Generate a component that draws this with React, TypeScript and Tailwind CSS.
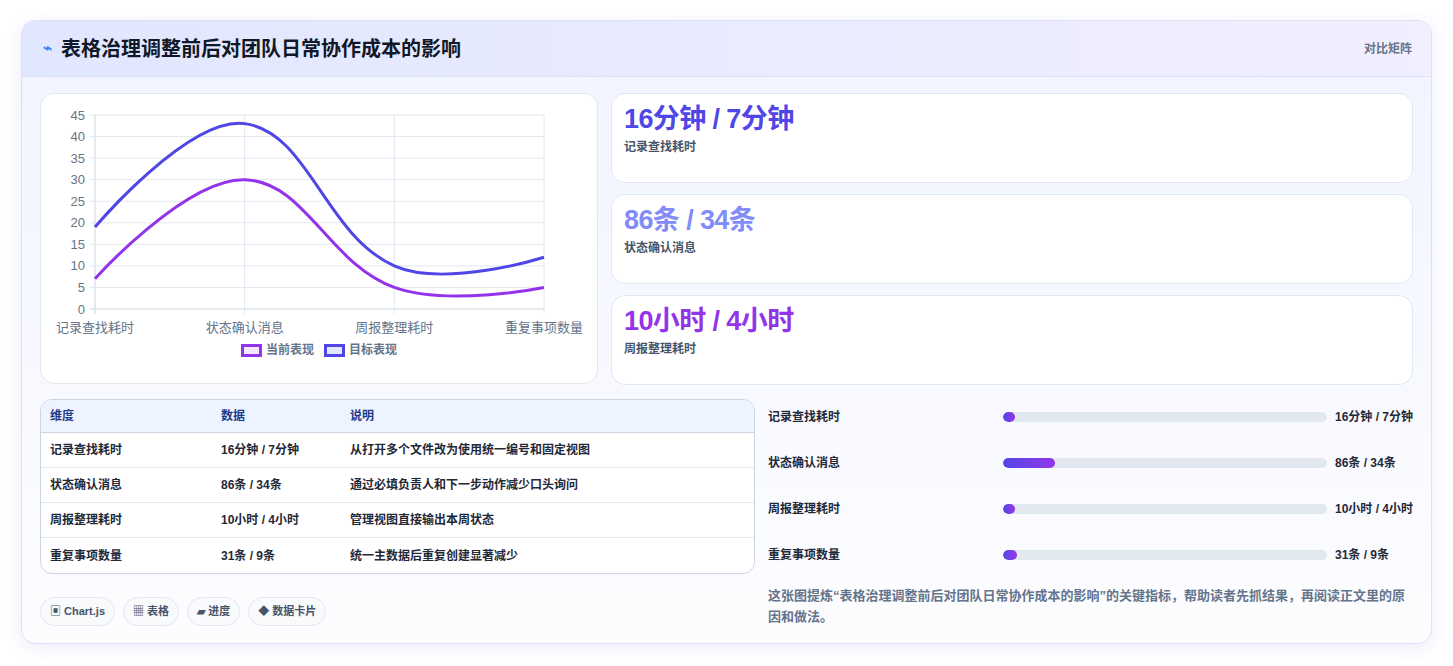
import React from 'react';

const labels = ['记录查找耗时', '状态确认消息', '周报整理耗时', '重复事项数量'];
const current = [7, 30, 5, 5];
const target = [19, 43, 10, 12];

const rows = [
  { name: '记录查找耗时', value: '16分钟 / 7分钟', note: '从打开多个文件改为使用统一编号和固定视图', fill: 12 },
  { name: '状态确认消息', value: '86条 / 34条', note: '通过必填负责人和下一步动作减少口头询问', fill: 52 },
  { name: '周报整理耗时', value: '10小时 / 4小时', note: '管理视图直接输出本周状态', fill: 12 },
  { name: '重复事项数量', value: '31条 / 9条', note: '统一主数据后重复创建显著减少', fill: 14 },
];

const stats = [
  { value: '16分钟 / 7分钟', label: '记录查找耗时', color: 'text-[#4f46e5]' },
  { value: '86条 / 34条', label: '状态确认消息', color: 'text-[#818cf8]' },
  { value: '10小时 / 4小时', label: '周报整理耗时', color: 'text-[#9333ea]' },
];

// plot area inside the chart svg
const X0 = 54;
const X1 = 503;
const Y0 = 21; // value 45
const Y1 = 215; // value 0
const xs = labels.map((_, i) => X0 + ((X1 - X0) * i) / 3);
const yOf = (v: number) => Y1 - ((Y1 - Y0) * v) / 45;

const splinePath = (data: number[]) => {
  const pts = data.map((v, i) => [xs[i], yOf(v)]);
  const t = 0.4;
  const cps = pts.map((p, i) => {
    if (i === 0 || i === pts.length - 1) return { prev: p, next: p };
    const a = pts[i - 1];
    const c = pts[i + 1];
    const d01 = Math.hypot(p[0] - a[0], p[1] - a[1]);
    const d12 = Math.hypot(c[0] - p[0], c[1] - p[1]);
    const fa = (t * d01) / (d01 + d12);
    const fb = (t * d12) / (d01 + d12);
    return {
      prev: [p[0] - fa * (c[0] - a[0]), Math.min(Y1, p[1] - fa * (c[1] - a[1]))],
      next: [p[0] + fb * (c[0] - a[0]), Math.min(Y1, p[1] + fb * (c[1] - a[1]))],
    };
  });
  let d = `M${pts[0][0]},${pts[0][1]}`;
  for (let i = 1; i < pts.length; i++) {
    const c1 = cps[i - 1].next;
    const c2 = cps[i].prev;
    d += ` C${c1[0]},${c1[1]} ${c2[0]},${c2[1]} ${pts[i][0]},${pts[i][1]}`;
  }
  return d;
};

const Chart = () => (
  <svg width="556" height="250" className="block">
    {Array.from({ length: 10 }).map((_, i) => {
      const v = i * 5;
      const y = yOf(v);
      return (
        <g key={v}>
          <line x1={X0 - 5} x2={X1} y1={y} y2={y} stroke={i === 0 ? '#cbd5e1' : '#e2e8f0'} />
          <text x={X0 - 10} y={y + 4.5} textAnchor="end" fontSize="13" fill="#64748b">
            {v}
          </text>
        </g>
      );
    })}
    {xs.map((x, i) => (
      <g key={i}>
        <line x1={x} x2={x} y1={Y0} y2={Y1 + 5} stroke={i === 0 ? '#cbd5e1' : '#e2e8f0'} />
        <text x={x} y={Y1 + 23} textAnchor="middle" fontSize="13" fill="#64748b">
          {labels[i]}
        </text>
      </g>
    ))}
    <path d={splinePath(target)} fill="none" stroke="#4f46e5" strokeWidth="3" />
    <path d={splinePath(current)} fill="none" stroke="#9333ea" strokeWidth="3" />
  </svg>
);

export default function App() {
  return (
    <div
      className="w-[1453px] h-[666px] bg-white pt-[20px] pl-[21px]"
      style={{ fontFamily: '"Liberation Sans", "Noto Sans CJK SC", sans-serif' }}
    >
      <div className="w-[1411px] h-[624px] rounded-[14px] border border-[#dbe2f5] bg-gradient-to-b from-[#f1f4ff] to-[#fdfdff] shadow-[0_4px_18px_rgba(79,70,229,0.10)] overflow-hidden">
        <div className="h-[56px] flex items-center justify-between px-[19px] bg-gradient-to-r from-[#e1e7fe] to-[#f1efff] border-b border-[#dde4f7]">
          <div className="flex items-center gap-[9px]">
            <span className="text-[#3b82f6] text-[15px] font-bold pl-[2px]">⌁</span>
            <span className="text-[20px] font-bold text-[#111827]">表格治理调整前后对团队日常协作成本的影响</span>
          </div>
          <span className="text-[12px] font-bold text-[#64748b]">对比矩阵</span>
        </div>

        <div className="px-[18px] pt-[16px]">
          <div className="flex gap-[13px]">
            <div className="w-[558px] h-[291px] rounded-[14px] border border-[#e2e8f0] bg-white">
              <Chart />
              <div className="flex justify-center items-center gap-[10px] -mt-[3px] text-[12px] font-bold text-[#64748b]">
                <span className="flex items-center gap-[4px]">
                  <span className="w-[21px] h-[13px] border-[3px] border-[#9333ea] bg-[#f3e8ff]" />
                  当前表现
                </span>
                <span className="flex items-center gap-[4px]">
                  <span className="w-[21px] h-[13px] border-[3px] border-[#4f46e5] bg-[#e0e7ff]" />
                  目标表现
                </span>
              </div>
            </div>
            <div className="flex-1 flex flex-col gap-[11px]">
              {stats.map((s) => (
                <div key={s.label} className="h-[90px] rounded-[14px] border border-[#e0e7f5] bg-white px-[12px] pt-[9px]">
                  <div className={`text-[27px] font-bold leading-[32px] tracking-[-0.6px] ${s.color}`}>{s.value}</div>
                  <div className="text-[12px] font-bold text-[#475569] mt-[3px]">{s.label}</div>
                </div>
              ))}
            </div>
          </div>

          <div className="flex gap-[13px] mt-[14px]">
            <div className="w-[715px]">
              <div className="rounded-[12px] border border-[#cbd5e1] bg-white overflow-hidden text-[12px] font-bold">
                <div className="flex h-[33px] items-center bg-[#eef4ff] text-[#1e3a8a] border-b border-[#cbd5e1]">
                  <span className="w-[180px] pl-[9px]">维度</span>
                  <span className="w-[129px]">数据</span>
                  <span>说明</span>
                </div>
                {rows.map((r, i) => (
                  <div
                    key={r.name}
                    className={`flex h-[35px] items-center text-[#1f2937] ${i < rows.length - 1 ? 'border-b border-[#e2e8f0]' : ''}`}
                  >
                    <span className="w-[180px] pl-[9px]">{r.name}</span>
                    <span className="w-[129px]">{r.value}</span>
                    <span>{r.note}</span>
                  </div>
                ))}
              </div>
              <div className="flex gap-[8px] mt-[23px] text-[11px] font-bold text-[#475569]">
                {['▣ Chart.js', '▦ 表格', '▰ 进度', '◆ 数据卡片'].map((c) => (
                  <span key={c} className="h-[29px] px-[9px] flex items-center rounded-full border border-[#e2e8f0] bg-[#f8fafc]">
                    {c}
                  </span>
                ))}
              </div>
            </div>

            <div className="flex-1 flex flex-col text-[12px] font-bold text-[#1f2937]">
              {rows.map((r) => (
                <div key={r.name} className="flex items-center h-[46px] first:-mt-[5px]">
                  <span className="w-[235px] shrink-0">{r.name}</span>
                  <div className="flex-1 h-[10px] rounded-full bg-[#e2e8f0] overflow-hidden">
                    <div
                      className="h-full rounded-full bg-gradient-to-r from-[#4f46e5] to-[#9333ea]"
                      style={{ width: r.fill }}
                    />
                  </div>
                  <span className="ml-[8px] w-[78px] whitespace-nowrap">{r.value}</span>
                </div>
              ))}
              <p className="mt-[7px] text-[13px] leading-[21px] text-[#64748b]">
                这张图提炼“表格治理调整前后对团队日常协作成本的影响”的关键指标，帮助读者先抓结果，再阅读正文里的原因和做法。
              </p>
            </div>
          </div>
        </div>
      </div>
    </div>
  );
}
